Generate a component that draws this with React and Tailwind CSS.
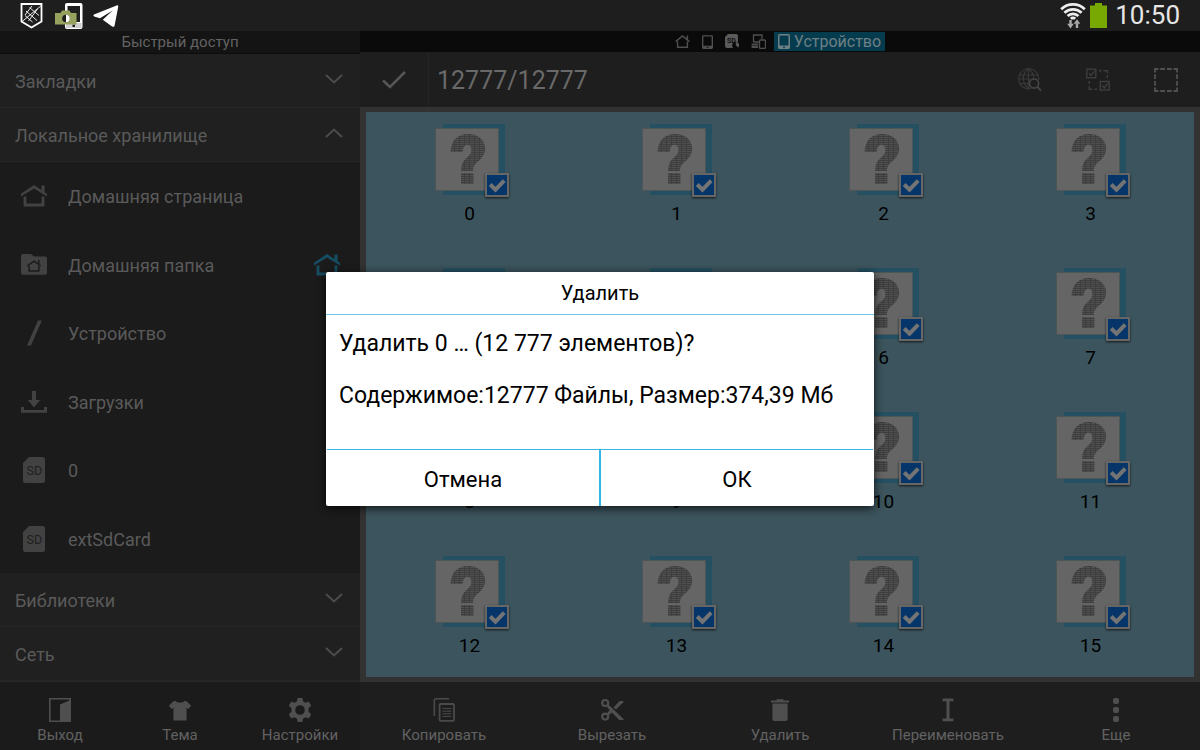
import React, { useState } from 'react';

const sidebarItems = [
  { id: 'home', label: 'Домашняя страница', icon: HomeIcon },
  { id: 'folder', label: 'Домашняя папка', icon: FolderHomeIcon, pinned: true },
  { id: 'device', label: 'Устройство', icon: SlashIcon },
  { id: 'downloads', label: 'Загрузки', icon: DownloadIcon },
  { id: 'sd0', label: '0', icon: SdIcon },
  { id: 'sdExt', label: 'extSdCard', icon: SdIcon },
];

const sidebarActions = [
  { label: 'Выход', icon: ExitIcon },
  { label: 'Тема', icon: ShirtIcon },
  { label: 'Настройки', icon: GearIcon },
];

const fileActions = [
  { label: 'Копировать', icon: CopyIcon },
  { label: 'Вырезать', icon: ScissorsIcon },
  { label: 'Удалить', icon: TrashIcon },
  { label: 'Переименовать', icon: CursorIcon },
  { label: 'Еще', icon: DotsIcon },
];

const files = Array.from({ length: 16 }, (_, i) => String(i));

/* Icons */

function HomeIcon({ className = 'w-[26px] h-[22px] text-[#424242]' }) {
  return (
    <svg viewBox="0 0 26 22" className={className} fill="currentColor">
      <path d="M13 0 20.4 5V0.4H23.6V7.2L26 8.8V11.6L13 3.4 0 11.6V8.8Z" />
      <path d="M2.6 11.6H5.4V18.6H20.6V11.6H23.4V21.6H2.6Z" />
    </svg>
  );
}

function FolderHomeIcon() {
  return (
    <svg viewBox="0 0 26 21" className="w-[26px] h-[21px]">
      <path d="M2 0H10L13 2.6H24A2 2 0 0 1 26 4.6V18.8A2 2 0 0 1 24 20.8H2A2 2 0 0 1 0 18.8V2A2 2 0 0 1 2 0Z" fill="#424242" />
      <g fill="none" stroke="#1b1b1b" strokeWidth="1.5">
        <path d="M6.2 12 13 7.2 19.8 12M17.8 6V10" />
        <path d="M8.2 12V17H17.8V12" />
      </g>
    </svg>
  );
}

function SlashIcon() {
  return (
    <svg viewBox="0 0 26 26" className="w-[26px] h-[26px]">
      <path d="M17 0.5H20.8L10 25.5H6Z" fill="#424242" />
    </svg>
  );
}

function DownloadIcon() {
  return (
    <svg viewBox="0 0 26 22" className="w-[26px] h-[22px]" fill="#424242">
      <path d="M11 0H15V9H19.2L13 16.4 6.8 9H11Z" />
      <path d="M0 16H3V19H23V16H26V21.8H0Z" />
    </svg>
  );
}

function SdIcon() {
  return (
    <svg viewBox="0 0 26 26" className="w-[26px] h-[26px]">
      <path d="M8 0H21.5A2.5 2.5 0 0 1 24 2.5V23.5A2.5 2.5 0 0 1 21.5 26H4.5A2.5 2.5 0 0 1 2 23.5V6Z" fill="#424242" />
      <text x="13.3" y="17.6" textAnchor="middle" fontSize="12.5" fill="#1f1f1f">SD</text>
    </svg>
  );
}

function ExitIcon() {
  return (
    <svg viewBox="0 0 24 24" className="w-6 h-6">
      <path d="M1.8 0.8H22.2V23.2H1.8Z" fill="none" stroke="#4f4f4f" strokeWidth="1.6" />
      <path d="M12 6.6 22.5 2V23.5H12Z" fill="#4f4f4f" />
    </svg>
  );
}

function ShirtIcon() {
  return (
    <svg viewBox="0 0 24 24" className="w-6 h-6" fill="#4f4f4f">
      <path d="M7.6 3C9 5 15 5 16.4 3L18.6 3.2 23.2 7.8 20.3 11 18.6 9.8V22.6H5.4V9.8L3.7 11 0.8 7.8 5.4 3.2Z" />
    </svg>
  );
}

function GearIcon() {
  return (
    <svg viewBox="0 0 24 24" className="w-6 h-6">
      <path
        fill="#4f4f4f"
        fillRule="evenodd"
        d="M9.6 0H14.4L15 3.3 17.6 4.8 20.8 3.6 23.2 7.8 20.6 10V14L23.2 16.2 20.8 20.4 17.6 19.2 15 20.7 14.4 24H9.6L9 20.7 6.4 19.2 3.2 20.4 0.8 16.2 3.4 14V10L0.8 7.8 3.2 3.6 6.4 4.8 9 3.3ZM12 7.2A4.8 4.8 0 1 0 12 16.8 4.8 4.8 0 1 0 12 7.2Z"
      />
    </svg>
  );
}

function CopyIcon() {
  return (
    <svg viewBox="0 0 24 24" className="w-6 h-6" fill="none" stroke="#4a4a4a">
      <path d="M2.3 18V2.8A2 2 0 0 1 4.3 0.8H17" strokeWidth="1.6" />
      <rect x="7.6" y="6" width="14.4" height="16.8" rx="1" strokeWidth="1.8" />
      <path d="M10.4 10.6H19.4M10.4 13.2H19.4M10.4 15.8H19.4M10.4 18.4H19.4" strokeWidth="1" />
    </svg>
  );
}

function ScissorsIcon() {
  return (
    <svg viewBox="0 0 24 24" className="w-6 h-6">
      <g fill="none" stroke="#4f4f4f" strokeWidth="2.2">
        <circle cx="5.2" cy="5" r="3" />
        <circle cx="5.2" cy="18.6" r="3" />
      </g>
      <path d="M7 9 8.9 7 23.5 21V22H19.2L11.8 14.6 8.6 17.4 7 15.4 9.6 12Z" fill="#4f4f4f" />
      <path d="M13.6 9.4 19.6 3H23.4V4.2L16 11.6Z" fill="#4f4f4f" />
    </svg>
  );
}

function TrashIcon() {
  return (
    <svg viewBox="0 0 24 24" className="w-6 h-6" fill="#4f4f4f">
      <path d="M3 2.6H8.5V1.2H15.5V2.6H21V4.6H3ZM4.4 5.6H19.6V21.2A1.8 1.8 0 0 1 17.8 23H6.2A1.8 1.8 0 0 1 4.4 21.2Z" />
    </svg>
  );
}

function CursorIcon() {
  return (
    <svg viewBox="0 0 24 24" className="w-6 h-6" fill="#4f4f4f">
      <path d="M6.6 0.5H17.4V3.3H13.5V20.5H17.4V23.3H6.6V20.5H10.5V3.3H6.6Z" />
    </svg>
  );
}

function DotsIcon() {
  return (
    <svg viewBox="0 0 24 24" className="w-6 h-6" fill="#4f4f4f">
      <rect x="9" y="0" width="6" height="6" rx="2" />
      <rect x="9" y="9" width="6" height="6" rx="2" />
      <rect x="9" y="18" width="6" height="6" rx="2" />
    </svg>
  );
}

function Chevron({ open }) {
  return (
    <svg viewBox="0 0 18 10" className="w-[18px] h-[10px] mb-1" fill="none" stroke="#4c4c4c" strokeWidth="2">
      <path d={open ? 'M1 9 9 1.5 17 9' : 'M1 1 9 8.5 17 1'} />
    </svg>
  );
}

function TabletIcon({ className }) {
  return (
    <svg viewBox="0 0 12 15" className={className}>
      <path fill="currentColor" fillRule="evenodd" d="M1.5 0H10.5A1.5 1.5 0 0 1 12 1.5V13.5A1.5 1.5 0 0 1 10.5 15H1.5A1.5 1.5 0 0 1 0 13.5V1.5A1.5 1.5 0 0 1 1.5 0ZM1.5 1.6V11.6H10.5V1.6ZM5 12.6V13.8H7V12.6Z" />
    </svg>
  );
}

function UnknownFileIcon({ id }) {
  return (
    <svg viewBox="0 0 80 74" className="w-20 h-[74px]">
      <defs>
        <pattern id={id} width="5" height="2" patternUnits="userSpaceOnUse">
          <rect width="5" height="2" fill="#3e3e3e" />
          <rect y="1" width="4" height="1" fill="#505050" />
        </pattern>
      </defs>
      <rect x="13" y="0" width="62" height="71" fill="#255062" />
      <rect x="5" y="4" width="64" height="63" fill="#4c5558" />
      <rect x="6" y="5" width="62" height="61" fill="#656565" />
      <g fill={`url(#${id})`}>
        <path d="M20.5 28C21 16 28 10 38 10 48 10 55 15.5 55 24.5 55 31 51.5 34.5 47.5 38 44 41 43 43 43 47H31C31 40.5 33 37 37 33.5 40 31 41.3 29 41.3 26 41.3 22.5 40 20.8 37.6 20.8 34.5 20.8 33 23.4 32.8 28Z" />
        <path d="M31 49H43.5V60H31Z" />
      </g>
    </svg>
  );
}

function StatusBar() {
  return (
    <header className="h-[31px] shrink-0 flex items-center justify-between px-5 bg-[#1e1e1e]">
      <div className="flex items-center gap-3">
        <svg viewBox="0 0 23 26" className="w-[23px] h-[26px]" fill="none" stroke="#fff">
          <path d="M1.5 1H21.5V18.5L11.5 24.5 1.5 18.5Z" strokeWidth="1.8" />
          <path d="M1.5 19 22 2M6 8 17 17.5M9.5 4.5 19 12.5M5 12.5 12.5 19M12 3 5 12M17.5 6 8.5 18" strokeWidth="0.9" />
        </svg>
        <svg viewBox="0 0 28 26" className="w-7 h-[26px]">
          <path fill="#fff" d="M12 0H25.5A2 2 0 0 1 27.5 2V24A2 2 0 0 1 25.5 26H12A2 2 0 0 1 10 24V2A2 2 0 0 1 12 0Z" />
          <path fill="#1e1e1e" d="M12.5 3H25V19H12.5Z" />
          <path fill="#cfcfcf" d="M11 20H26.5V25H11Z" />
          <rect x="17.5" y="21.5" width="2.5" height="2.5" fill="#222" />
          <path fill="#98a25f" d="M0 10H5.5L7 7.5H14.5L16 10H21.5V21.5H0Z" />
          <circle cx="11" cy="15.5" r="3.8" fill="#1e1e1e" />
          <path fill="#fff" d="M11 11.7A3.8 3.8 0 0 1 11 19.3Z" />
        </svg>
        <svg viewBox="0 0 26 22" className="w-[26px] h-[22px] -ml-[2px]" fill="#fff">
          <path d="M1 9.6 23.6 0.4C24.8 0 25.4 0.6 25.2 1.9L21.6 20.4C21.3 21.9 20.3 22.2 19.1 21.4L9.8 14.8 19.6 5.6 7 13.3 1.2 11.4C0.2 11 0.2 10.1 1 9.6Z" />
        </svg>
      </div>
      <div className="flex items-center gap-1">
        <svg viewBox="0 0 26 26" className="w-[26px] h-[26px]" fill="none" stroke="#eee" strokeWidth="2.8">
          <path d="M1.2 6.2A17 17 0 0 1 24.8 6.2" />
          <path d="M4.4 9.8A12.4 12.4 0 0 1 21.6 9.8" />
          <path d="M7.6 13A7.8 7.8 0 0 1 18.4 13" />
          <path d="M10.8 15.8A3.4 3.4 0 0 1 15.2 15.8" />
          <path d="M10.5 17V21.5M17 25V20.5" stroke="#aaa" strokeWidth="2.4" />
          <path d="M7.2 20.8H13.8L10.5 25.5ZM13.7 20.8H20.3L17 16.2Z" fill="#aaa" stroke="none" />
        </svg>
        <svg viewBox="0 0 17 25" className="w-[17px] h-[25px]" fill="#78a802">
          <path d="M5 0H12V2.4H17V25H0V2.4H5Z" />
        </svg>
        <span className="pl-1 text-[26px] leading-[31px] text-[#e6e6e6]">10:50</span>
      </div>
    </header>
  );
}

function SectionHeader({ title, open }) {
  return (
    <button className="w-full h-[54px] shrink-0 flex items-center justify-between pl-[15px] pr-[17px] bg-[#202020] border-b border-[#262626] text-lg text-[#5a5a5a]">
      <span className="pt-[3px]">{title}</span>
      <Chevron open={open} />
    </button>
  );
}

function ActionBar({ actions }) {
  return (
    <div className="h-[68px] shrink-0 flex">
      {actions.map(({ label, icon: Icon }) => (
        <button key={label} className="flex-1 flex flex-col items-center pt-4 gap-[3px] text-[15px] leading-5 text-[#626262]">
          <Icon />
          {label}
        </button>
      ))}
    </div>
  );
}

function Sidebar() {
  return (
    <aside className="w-[30%] shrink-0 flex flex-col bg-[#1b1b1b]">
      <h2 className="h-[23px] shrink-0 bg-[#141414] border-b border-[#0c0c0c] text-center text-[15px] leading-[23px] text-[#636363]">
        Быстрый доступ
      </h2>
      <SectionHeader title="Закладки" />
      <SectionHeader title="Локальное хранилище" open />
      <ul className="flex-1 min-h-0 flex flex-col">
        {sidebarItems.map(({ id, label, icon: Icon, pinned }) => (
          <li key={id} className="flex-1 flex">
            <button className="w-full flex items-center gap-[21px] pl-[21px] pr-5 text-lg text-[#5a5a5a] text-left">
              <Icon />
              <span className="flex-1 pt-[2px]">{label}</span>
              {pinned && <HomeIcon className="w-[26px] h-[22px] text-[#164d63]" />}
            </button>
          </li>
        ))}
      </ul>
      <SectionHeader title="Библиотеки" />
      <SectionHeader title="Сеть" />
      <div className="border-t border-[#262626]">
        <ActionBar actions={sidebarActions} />
      </div>
    </aside>
  );
}

function TabStrip() {
  return (
    <nav className="h-[21px] shrink-0 flex items-center justify-center gap-3 bg-[#0a0a0a] text-[#4f4f4f]">
      <svg viewBox="0 0 15 13" className="w-[15px] h-[13px]" fill="none" stroke="currentColor" strokeWidth="1.4">
        <path d="M0.6 6.6 7.5 1 14.4 6.6M12.4 0.4V4.8M2.6 6.4V12.2H12.4V6.4" />
      </svg>
      <TabletIcon className="w-[11px] h-[14px]" />
      <svg viewBox="0 0 14 15" className="w-[14px] h-[15px]">
        <path fill="#5a5a5a" d="M3 0H11A2 2 0 0 1 13 2V13A1 1 0 0 1 12 14H2A2 2 0 0 1 0 12V3Z" />
        <text x="6.5" y="8.6" textAnchor="middle" fontSize="7" fontWeight="700" fill="#111">SD</text>
        <circle cx="10.8" cy="11.4" r="3.6" fill="#0a0a0a" />
        <path d="M10.8 8V11.4L13.6 13.4A3.4 3.4 0 0 0 10.8 8Z" fill="#5a5a5a" />
      </svg>
      <svg viewBox="0 0 15 15" className="w-[15px] h-[15px]" fill="none" stroke="currentColor" strokeWidth="1.3">
        <path d="M2.5 8V1H11V5M8 8H2.5" />
        <rect x="8.5" y="6" width="6" height="8.4" rx="1" />
        <path d="M0.6 10.5H7M0.6 13H7" strokeWidth="1.8" />
      </svg>
      <a href="#device" className="h-[19px] -ml-1 flex items-center gap-1 px-1 bg-[#043c4e] text-base leading-[19px] text-[#6e7f85]">
        <TabletIcon className="w-3 h-[15px]" />
        Устройство
      </a>
    </nav>
  );
}

function Toolbar({ selected, total }) {
  return (
    <div className="h-[55px] shrink-0 flex items-center bg-[#1e1e1e]">
      <button aria-label="Готово" className="w-[69px] h-full flex items-center justify-center border-r border-[#242424]">
        <svg viewBox="0 0 24 18" className="w-6 h-[18px]" fill="none" stroke="#555" strokeWidth="2.6">
          <path d="M1 9.5 8 16 23 1" />
        </svg>
      </button>
      <h1 className="flex-1 pl-2 pt-[2px] text-[25px] text-[#696969]">{selected}/{total}</h1>
      <button aria-label="Поиск" className="w-[68px] flex justify-center">
        <svg viewBox="0 0 24 24" className="w-6 h-6" fill="none" stroke="#393939" strokeWidth="1.2">
          <path d="M13 20.5A10 10 0 1 1 20.6 12" />
          <path d="M10.5 0.5V20.5M1 7H20M0.5 11H12M1.5 15.5H10M10.5 0.5C3.5 6 3.5 15 10.5 20.5M10.5 0.5C14 3.5 15.5 6 15.8 9.5" />
          <circle cx="16" cy="15.5" r="4.6" stroke="#454545" strokeWidth="1.6" />
          <path d="M19.3 18.8 23 22.6" stroke="#454545" strokeWidth="2" />
        </svg>
      </button>
      <button aria-label="Выбрать интервал" className="w-[68px] flex justify-center">
        <svg viewBox="0 0 24 24" className="w-6 h-6" fill="none" stroke="#3d3d3d" strokeWidth="1.4">
          <rect x="0.8" y="1.2" width="9" height="8.5" />
          <path d="M3 5.2 5 7.5 8.5 3.2" />
          <rect x="14.2" y="13.5" width="9" height="8.5" />
          <path d="M16.2 17.5 18.2 19.8 21.7 15.5" />
          <path d="M13 2.8H15.5M17.5 2.8H21.3V5M21.3 7V10M3.2 13V16M3.2 18V21.3H6.5M8.5 21.3H11" />
        </svg>
      </button>
      <button aria-label="Выбрать все" className="w-[68px] flex justify-center">
        <svg viewBox="0 0 24 24" className="w-6 h-6" fill="none" stroke="#505050" strokeWidth="1.8">
          <path d="M1 4.5V1H4.5M19.5 1H23V4.5M23 19.5V23H19.5M4.5 23H1V19.5" />
          <path d="M6.2 1H11M13 1H17.8M6.2 23H11M13 23H17.8M1 6.2V11M1 13V17.8M23 6.2V11M23 13V17.8" />
        </svg>
      </button>
    </div>
  );
}

function FileTile({ name, checked, onToggle }) {
  return (
    <label className="flex flex-col items-center pt-3">
      <div className="relative w-20 h-[74px]">
        <UnknownFileIcon id={`lines-${name}`} />
        <input
          type="checkbox"
          checked={checked}
          onChange={onToggle}
          className="absolute right-px bottom-px w-6 h-6 appearance-none border-2 border-[#666666] bg-[#06356a] shadow-[0_1px_2px_rgba(0,0,0,0.7)]"
        />
        {checked && (
          <svg viewBox="0 0 24 24" className="absolute right-px bottom-px w-6 h-6 pointer-events-none" fill="none" stroke="#747474" strokeWidth="4">
            <path d="M5.2 11.5 10.5 16.6 19.2 7.6" />
          </svg>
        )}
      </div>
      <span className="mt-1 text-[19px] leading-6 text-black">{name}</span>
    </label>
  );
}

function DeleteDialog() {
  return (
    <div role="dialog" aria-labelledby="dialog-title" className="w-full max-w-[548px] bg-white rounded-[2px] text-black shadow-[0_2px_10px_rgba(0,0,0,0.8)]">
      <h2 id="dialog-title" className="h-[43px] border-b border-[#6cc8ea] text-center text-xl leading-[43px]">Удалить</h2>
      <div className="h-[134px] px-[13px] pt-[14px] text-[23px] leading-[30px]">
        <p>Удалить 0 … (12 777 элементов)?</p>
        <p className="mt-[22px]">Содержимое:12777 Файлы, Размер:374,39 Мб</p>
      </div>
      <div className="h-[57px] mx-px flex border-t border-[#33b5e5] text-[22px]">
        <button className="flex-1 pt-[2px] border-r-2 border-[#33b5e5]">Отмена</button>
        <button className="flex-1 pt-[2px]">ОК</button>
      </div>
    </div>
  );
}

export default function App() {
  const [unchecked, setUnchecked] = useState([]);

  const toggle = (name) =>
    setUnchecked((prev) => (prev.includes(name) ? prev.filter((n) => n !== name) : [...prev, name]));

  return (
    <div className="h-screen flex flex-col overflow-hidden bg-[#1e1e1e] font-[Roboto,sans-serif]">
      <StatusBar />
      <div className="relative flex-1 min-h-0 flex">
        <Sidebar />
        <main className="flex-1 min-w-0 flex flex-col">
          <TabStrip />
          <Toolbar selected={12777 - unchecked.length} total={12777} />
          <div className="flex-1 min-h-0 px-[6px] py-[5px] bg-[#323232]">
            <div className="h-full overflow-hidden grid grid-cols-4 auto-rows-[144px] bg-[#3c545d]">
              {files.map((name) => (
                <FileTile key={name} name={name} checked={!unchecked.includes(name)} onToggle={() => toggle(name)} />
              ))}
            </div>
          </div>
          <ActionBar actions={fileActions} />
        </main>
        <div className="absolute inset-0 flex items-center justify-center pb-[3px]">
          <DeleteDialog />
        </div>
      </div>
    </div>
  );
}
